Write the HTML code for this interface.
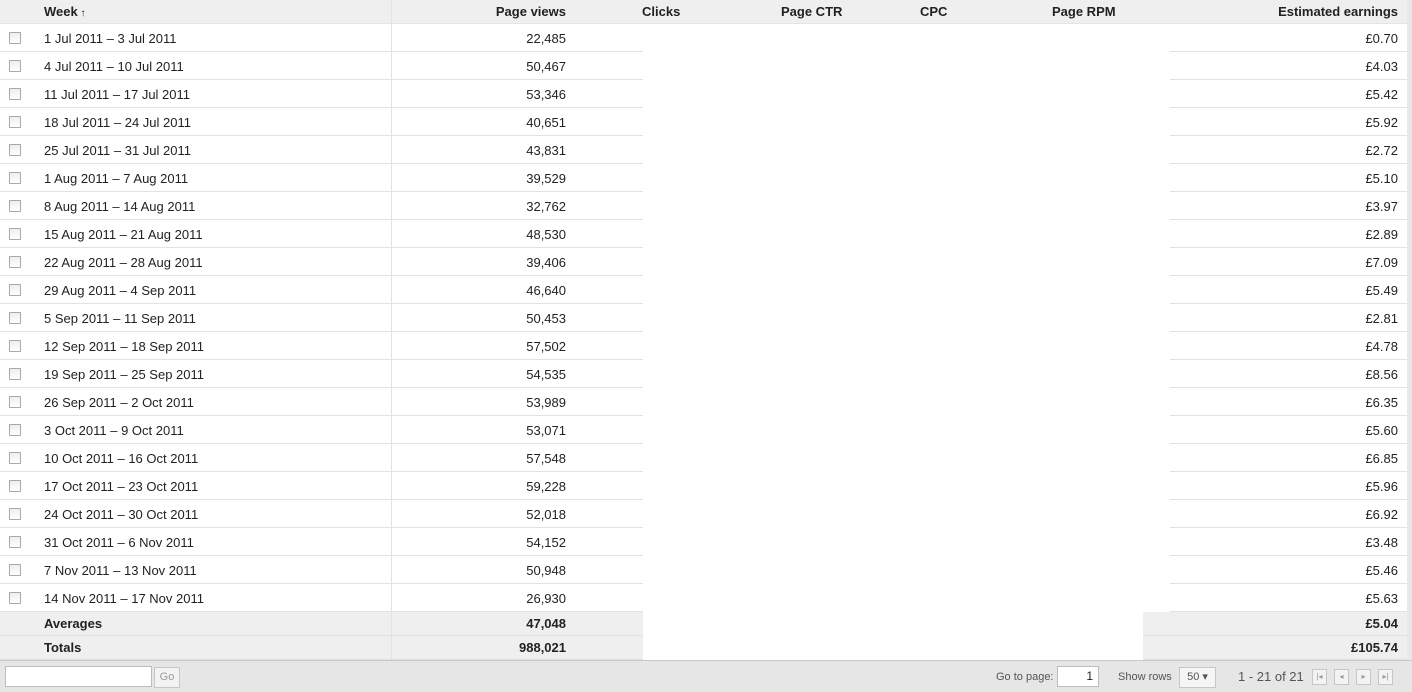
<!DOCTYPE html>
<html><head><meta charset="utf-8"><style>
*{margin:0;padding:0;box-sizing:border-box}
body{width:1412px;height:692px;background:#fff;font-family:"Liberation Sans",Arial,sans-serif;font-size:13px;color:#222;position:relative;overflow:hidden}
.hdr{position:absolute;left:0;top:0;width:1412px;height:24px;background:#efefef;border-bottom:1px solid #e4e4e4}
.hdr span{position:absolute;top:4px;font-weight:bold;color:#222}
.r{position:absolute;left:0;width:1412px;height:28px;border-bottom:1px solid #e2e2e2}
.r .cb{position:absolute;left:9px;top:8px;width:12px;height:12px;border:1px solid #a8a8a8;background:linear-gradient(#eee,#fff);border-radius:1px}
.r .w{position:absolute;left:44px;top:7px}
.r .pv{position:absolute;right:846px;top:7px}
.r .e{position:absolute;right:14px;top:7px}
.g{position:absolute;left:0;width:1412px;height:24px;background:#efefef;border-bottom:1px solid #e0e0e0;font-weight:bold}
.g .w{position:absolute;left:44px;top:4px}
.g .pv{position:absolute;right:846px;top:4px}
.g .e{position:absolute;right:14px;top:4px}
.vl{position:absolute;left:391px;top:0;width:1px;height:660px;background:#e2e2e2}
.rl{position:absolute;left:1407px;top:0;width:5px;height:660px;background:#e8e8e8}
.blank{position:absolute;left:643px;top:24px;width:527px;height:588px;background:#fff}
.blank2{position:absolute;left:643px;top:612px;width:500px;height:48px;background:#fff}
.ft{position:absolute;left:0;top:660px;width:1412px;height:32px;background:#e6e6e6;border-top:1px solid #c8c8c8;font-size:11px;color:#555}
.box{position:absolute;background:#fff;border:1px solid #bcbcbc}
.btn{position:absolute;border:1px solid #c6c6c6;background:#f3f3f3;color:#999;text-align:center}
</style></head><body>
<div class="hdr">
<span style="left:44px">Week<span style="position:static;font-size:10px;font-weight:bold"> ↑</span></span>
<span style="right:846px">Page views</span>
<span style="left:642px">Clicks</span>
<span style="left:781px">Page CTR</span>
<span style="left:920px">CPC</span>
<span style="left:1052px">Page RPM</span>
<span style="right:14px">Estimated earnings</span>
</div>
<div class="r" style="top:24px"><i class="cb"></i><span class="w">1 Jul 2011 – 3 Jul 2011</span><span class="pv">22,485</span><span class="e">£0.70</span></div>
<div class="r" style="top:52px"><i class="cb"></i><span class="w">4 Jul 2011 – 10 Jul 2011</span><span class="pv">50,467</span><span class="e">£4.03</span></div>
<div class="r" style="top:80px"><i class="cb"></i><span class="w">11 Jul 2011 – 17 Jul 2011</span><span class="pv">53,346</span><span class="e">£5.42</span></div>
<div class="r" style="top:108px"><i class="cb"></i><span class="w">18 Jul 2011 – 24 Jul 2011</span><span class="pv">40,651</span><span class="e">£5.92</span></div>
<div class="r" style="top:136px"><i class="cb"></i><span class="w">25 Jul 2011 – 31 Jul 2011</span><span class="pv">43,831</span><span class="e">£2.72</span></div>
<div class="r" style="top:164px"><i class="cb"></i><span class="w">1 Aug 2011 – 7 Aug 2011</span><span class="pv">39,529</span><span class="e">£5.10</span></div>
<div class="r" style="top:192px"><i class="cb"></i><span class="w">8 Aug 2011 – 14 Aug 2011</span><span class="pv">32,762</span><span class="e">£3.97</span></div>
<div class="r" style="top:220px"><i class="cb"></i><span class="w">15 Aug 2011 – 21 Aug 2011</span><span class="pv">48,530</span><span class="e">£2.89</span></div>
<div class="r" style="top:248px"><i class="cb"></i><span class="w">22 Aug 2011 – 28 Aug 2011</span><span class="pv">39,406</span><span class="e">£7.09</span></div>
<div class="r" style="top:276px"><i class="cb"></i><span class="w">29 Aug 2011 – 4 Sep 2011</span><span class="pv">46,640</span><span class="e">£5.49</span></div>
<div class="r" style="top:304px"><i class="cb"></i><span class="w">5 Sep 2011 – 11 Sep 2011</span><span class="pv">50,453</span><span class="e">£2.81</span></div>
<div class="r" style="top:332px"><i class="cb"></i><span class="w">12 Sep 2011 – 18 Sep 2011</span><span class="pv">57,502</span><span class="e">£4.78</span></div>
<div class="r" style="top:360px"><i class="cb"></i><span class="w">19 Sep 2011 – 25 Sep 2011</span><span class="pv">54,535</span><span class="e">£8.56</span></div>
<div class="r" style="top:388px"><i class="cb"></i><span class="w">26 Sep 2011 – 2 Oct 2011</span><span class="pv">53,989</span><span class="e">£6.35</span></div>
<div class="r" style="top:416px"><i class="cb"></i><span class="w">3 Oct 2011 – 9 Oct 2011</span><span class="pv">53,071</span><span class="e">£5.60</span></div>
<div class="r" style="top:444px"><i class="cb"></i><span class="w">10 Oct 2011 – 16 Oct 2011</span><span class="pv">57,548</span><span class="e">£6.85</span></div>
<div class="r" style="top:472px"><i class="cb"></i><span class="w">17 Oct 2011 – 23 Oct 2011</span><span class="pv">59,228</span><span class="e">£5.96</span></div>
<div class="r" style="top:500px"><i class="cb"></i><span class="w">24 Oct 2011 – 30 Oct 2011</span><span class="pv">52,018</span><span class="e">£6.92</span></div>
<div class="r" style="top:528px"><i class="cb"></i><span class="w">31 Oct 2011 – 6 Nov 2011</span><span class="pv">54,152</span><span class="e">£3.48</span></div>
<div class="r" style="top:556px"><i class="cb"></i><span class="w">7 Nov 2011 – 13 Nov 2011</span><span class="pv">50,948</span><span class="e">£5.46</span></div>
<div class="r" style="top:584px"><i class="cb"></i><span class="w">14 Nov 2011 – 17 Nov 2011</span><span class="pv">26,930</span><span class="e">£5.63</span></div>
<div class="g" style="top:612px"><span class="w">Averages</span><span class="pv">47,048</span><span class="e">£5.04</span></div>
<div class="g" style="top:636px"><span class="w">Totals</span><span class="pv">988,021</span><span class="e">£105.74</span></div>
<div class="vl"></div>
<div class="rl"></div>
<div class="blank"></div>
<div class="blank2"></div>
<div class="ft">
<div class="box" style="left:5px;top:5px;width:147px;height:21px"></div>
<div class="btn" style="left:154px;top:6px;width:26px;height:21px;line-height:19px">Go</div>
<span style="position:absolute;left:996px;top:10px">Go to page:</span>
<div class="box" style="left:1057px;top:5px;width:42px;height:21px;text-align:right;padding-right:5px;line-height:19px;color:#222;font-size:12px">1</div>
<span style="position:absolute;left:1118px;top:10px">Show rows</span>
<div class="btn" style="left:1179px;top:6px;width:37px;height:21px;line-height:19px;color:#555;background:#f5f5f5">50 ▾</div>
<span style="position:absolute;left:1238px;top:8px;font-size:13px;color:#555">1 - 21 of 21</span>
<div class="btn" style="left:1312px;top:8px;width:15px;height:16px;font-size:8px;line-height:14px">|◂</div>
<div class="btn" style="left:1334px;top:8px;width:15px;height:16px;font-size:8px;line-height:14px">◂</div>
<div class="btn" style="left:1356px;top:8px;width:15px;height:16px;font-size:8px;line-height:14px">▸</div>
<div class="btn" style="left:1378px;top:8px;width:15px;height:16px;font-size:8px;line-height:14px">▸|</div>
</div>
</body></html>
